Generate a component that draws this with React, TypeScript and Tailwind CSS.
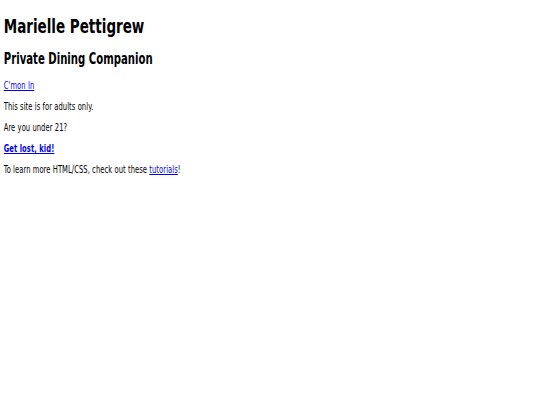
import React from 'react';

export default function App() {
  return (
    <div className="min-h-[405px] bg-white">
      {/* the reference uses a condensed face; squeeze DejaVu Sans to match */}
      <div className="px-[5px] py-px text-black font-['DejaVu_Sans_Condensed','DejaVu_Sans',sans-serif] leading-[normal] origin-top-left scale-x-[0.75]">
        <h1 className="text-[20px] font-bold mt-[13.4px] mb-[11.4px]">Marielle Pettigrew</h1>
        <h2 className="text-[15px] font-bold mt-[11.4px] mb-[12.45px]">Private Dining Companion</h2>
        <div className="text-[10px] tracking-[0.1px]">
          <p className="my-[10px]">
            <a href="#" className="text-[#0000ee] underline">C'mon In</a>
          </p>
          <p className="my-[10px]">This site is for adults only.</p>
          <p className="my-[10px]">Are you under 21?</p>
          <p className="my-[10px]">
            <a href="#" className="text-[#0000ee] underline font-bold">Get lost, kid!</a>
          </p>
          <p className="my-[10px]">
            To learn more HTML/CSS, check out these{' '}
            <a href="#" className="text-[#0000ee] underline">tutorials</a>!
          </p>
        </div>
      </div>
    </div>
  );
}
